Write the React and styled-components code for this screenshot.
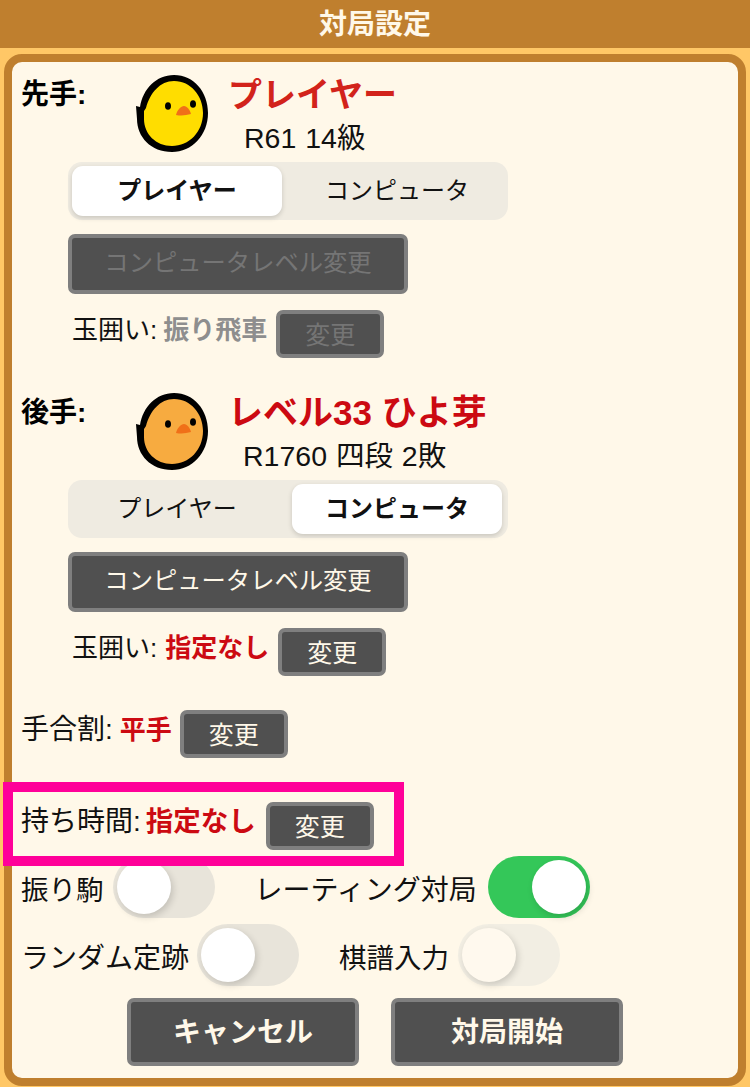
import styled, { createGlobalStyle } from 'styled-components';

const GlobalStyle = createGlobalStyle`
  html, body {
    margin: 0;
    padding: 0;
    background: #ffc766;
  }
  body {
    font-family: "Liberation Sans", "Noto Sans CJK JP", sans-serif;
    color: #111;
  }
`;

function Chick({ body }) {
  return (
    <ChickSvg viewBox='0 0 72 77' width='72' height='77'>
      <path
        d='M38 0C58 0 72 17 72 38C72 60 56 77 36 77C15 77 1 62 1 44L0 31L4 32C7 14 20 0 38 0Z'
        fill='#000'
      />
      <path
        d='M38 6C55 6 67 21 67 38C67 57 53 71 36 71C20 71 8 59 8 44L8 36L10 33C14 18 24 6 38 6Z'
        fill={body}
      />
      <ellipse cx='32' cy='31' rx='3' ry='3.8' fill='#000' />
      <ellipse cx='57' cy='29' rx='3' ry='3.8' fill='#000' />
      <path d='M40 40C41 35 45 31 48 31C51 31 54 35 55 39C50 40.5 45 41 40 40Z' fill='#f07018' />
    </ChickSvg>
  );
}

function PlayerHeader({ side, body, name, nameColor, nameSize, info, infoLeft, top }) {
  return (
    <HeaderRow $top={top}>
      <SideLabel>{side}</SideLabel>
      <Chick body={body} />
      <HeaderInfo>
        <PlayerName $color={nameColor} $size={nameSize}>{name}</PlayerName>
        <PlayerInfo $left={infoLeft}>{info}</PlayerInfo>
      </HeaderInfo>
    </HeaderRow>
  );
}

function Segment({ active }) {
  return (
    <SegmentWrap>
      <SegmentItem $active={active === 0}>プレイヤー</SegmentItem>
      <SegmentItem $active={active === 1}>コンピュータ</SegmentItem>
    </SegmentWrap>
  );
}

function Switch({ on, disabled }) {
  return (
    <SwitchTrack $on={on} $disabled={disabled}>
      <SwitchThumb $disabled={disabled} />
    </SwitchTrack>
  );
}

export default function App() {
  return (
    <>
      <GlobalStyle />
      <TitleBar>対局設定</TitleBar>
      <Panel>
        <PlayerHeader
          side='先手:'
          body='#ffdd00'
          name='プレイヤー'
          nameColor='#d2231b'
          nameSize={34}
          info='R61 14級'
          infoLeft={16}
          top={0}
        />
        <Segment active={0} />
        <LevelButton $disabled>コンピュータレベル変更</LevelButton>
        <SettingRow $left={60} $top={16}>
          <SettingLabel>玉囲い:</SettingLabel>
          <SettingValue $color='#8e8e8e' $gap={6}>振り飛車</SettingValue>
          <ChangeButton $gap={9} $disabled>変更</ChangeButton>
        </SettingRow>

        <PlayerHeader
          side='後手:'
          body='#f7ab40'
          name='レベル33 ひよ芽'
          nameColor='#cc0a12'
          nameSize={35}
          info='R1760 四段 2敗'
          infoLeft={15}
          top={22}
        />
        <Segment active={1} />
        <LevelButton>コンピュータレベル変更</LevelButton>
        <SettingRow $left={60} $top={16}>
          <SettingLabel>玉囲い:</SettingLabel>
          <SettingValue $color='#cc0a12' $gap={8}>指定なし</SettingValue>
          <ChangeButton $gap={9}>変更</ChangeButton>
        </SettingRow>

        <SettingRow $left={9} $top={34}>
          <SettingLabel $size={28}>手合割:</SettingLabel>
          <SettingValue $color='#cc0a12' $gap={7}>平手</SettingValue>
          <ChangeButton>変更</ChangeButton>
        </SettingRow>

        <SettingRow $left={9} $top={44}>
          <Highlight />
          <SettingLabel $size={28}>持ち時間:</SettingLabel>
          <SettingValue $color='#cc0a12' $gap={5} $size={27.5}>指定なし</SettingValue>
          <ChangeButton $gap={10}>変更</ChangeButton>
        </SettingRow>

        <SwitchRow>
          <SwitchGroup $after={40}>
            <SwitchLabel $gap={9}>振り駒</SwitchLabel>
            <Switch />
          </SwitchGroup>
          <SwitchGroup>
            <SwitchLabel $size={28} $gap={11}>レーティング対局</SwitchLabel>
            <Switch on />
          </SwitchGroup>
        </SwitchRow>
        <SwitchRow>
          <SwitchGroup $after={40}>
            <SwitchLabel $size={28} $gap={8}>ランダム定跡</SwitchLabel>
            <Switch />
          </SwitchGroup>
          <SwitchGroup>
            <SwitchLabel $gap={9}>棋譜入力</SwitchLabel>
            <Switch disabled />
          </SwitchGroup>
        </SwitchRow>

        <FooterRow>
          <FooterButton>キャンセル</FooterButton>
          <FooterButton>対局開始</FooterButton>
        </FooterRow>
      </Panel>
    </>
  );
}

const TitleBar = styled.div`
  height: 48px;
  line-height: 50px;
  background: #bf7f2e;
  color: #fff8e9;
  font-size: 28px;
  font-weight: 700;
  text-align: center;
`;

const Panel = styled.div`
  box-sizing: border-box;
  width: 742px;
  height: 1032px;
  margin: 6px 4px 0;
  border: 8px solid #bf7f2e;
  border-radius: 18px;
  background: #fff8e9;
`;

const HeaderRow = styled.div`
  display: flex;
  height: 100px;
  margin-top: ${(p) => p.$top}px;
  padding-left: 9px;
`;

const SideLabel = styled.div`
  flex: none;
  width: 115px;
  margin-top: 15px;
  font-size: 28px;
  font-weight: 700;
  line-height: 36px;
  color: #000;
`;

const ChickSvg = styled.svg`
  flex: none;
  margin-top: 13px;
`;

const HeaderInfo = styled.div`
  display: flex;
  flex-direction: column;
  margin-left: 20px;
  margin-top: 12px;
`;

const PlayerName = styled.div`
  font-size: ${(p) => p.$size}px;
  font-weight: 700;
  line-height: 42px;
  white-space: nowrap;
  color: ${(p) => p.$color};
`;

const PlayerInfo = styled.div`
  margin-left: ${(p) => p.$left}px;
  margin-top: 2px;
  font-size: 28.5px;
  line-height: 40px;
  word-spacing: 1px;
  white-space: nowrap;
`;

const SegmentWrap = styled.div`
  box-sizing: border-box;
  display: flex;
  gap: 10px;
  width: 440px;
  height: 58px;
  margin-left: 56px;
  padding: 4px;
  border-radius: 14px;
  background: #efebe1;
`;

const SegmentItem = styled.div`
  flex: none;
  width: 210px;
  border-radius: 11px;
  text-align: center;
  font-size: 24px;
  line-height: 50px;
  font-weight: ${(p) => (p.$active ? 700 : 400)};
  background: ${(p) => (p.$active ? '#fff' : 'transparent')};
  box-shadow: ${(p) => (p.$active ? '0 2px 5px rgba(0, 0, 0, 0.16)' : 'none')};
`;

const DarkButton = styled.div`
  box-sizing: border-box;
  border: 4px solid #7f7f7f;
  border-radius: 7px;
  background: #505050;
  text-align: center;
  white-space: nowrap;
  color: ${(p) => (p.$disabled ? '#757575' : '#fff8e9')};
`;

const LevelButton = styled(DarkButton)`
  width: 340px;
  height: 60px;
  margin-left: 56px;
  margin-top: 14px;
  font-size: 24.3px;
  line-height: 50px;
`;

const SettingRow = styled.div`
  position: relative;
  display: flex;
  align-items: center;
  height: 48px;
  margin-top: ${(p) => p.$top}px;
  padding-left: ${(p) => p.$left}px;
`;

const SettingLabel = styled.div`
  margin-bottom: 8px;
  font-size: ${(p) => p.$size || 26}px;
  line-height: 36px;
  white-space: nowrap;
`;

const SettingValue = styled.div`
  margin-left: ${(p) => p.$gap}px;
  margin-bottom: 8px;
  font-size: ${(p) => p.$size || 26}px;
  font-weight: 700;
  line-height: 36px;
  white-space: nowrap;
  color: ${(p) => p.$color};
`;

const ChangeButton = styled(DarkButton)`
  width: 108px;
  height: 48px;
  margin-left: ${(p) => p.$gap || 8}px;
  font-size: 25px;
  line-height: 42px;
`;

const Highlight = styled.div`
  position: absolute;
  z-index: 2;
  left: -9px;
  top: -20px;
  box-sizing: border-box;
  width: 401px;
  height: 84px;
  border: 10px solid #ff0099;
`;

const SwitchRow = styled.div`
  display: flex;
  height: 62px;
  margin-top: 6px;
  padding-left: 9px;
`;

const SwitchGroup = styled.div`
  display: flex;
  align-items: center;
  margin-right: ${(p) => p.$after || 0}px;
`;

const SwitchLabel = styled.div`
  margin-right: ${(p) => p.$gap || 10}px;
  margin-top: 7px;
  font-size: ${(p) => p.$size || 27.5}px;
  line-height: 36px;
  white-space: nowrap;
`;

const SwitchTrack = styled.div`
  box-sizing: border-box;
  display: flex;
  justify-content: ${(p) => (p.$on ? 'flex-end' : 'flex-start')};
  flex: none;
  width: 102px;
  height: 62px;
  padding: 4px;
  border-radius: 31px;
  background: ${(p) => (p.$on ? '#34c759' : p.$disabled ? '#f2eee3' : '#e8e4da')};
`;

const SwitchThumb = styled.div`
  width: 54px;
  height: 54px;
  border-radius: 50%;
  background: ${(p) => (p.$disabled ? '#fff9ee' : '#fff')};
  box-shadow: 2px 3px 7px rgba(0, 0, 0, 0.16);
`;

const FooterRow = styled.div`
  display: flex;
  gap: 32px;
  margin-top: 12px;
  margin-left: 115px;
`;

const FooterButton = styled(DarkButton)`
  width: 232px;
  height: 68px;
  font-size: 28px;
  font-weight: 700;
  line-height: 62px;
`;
